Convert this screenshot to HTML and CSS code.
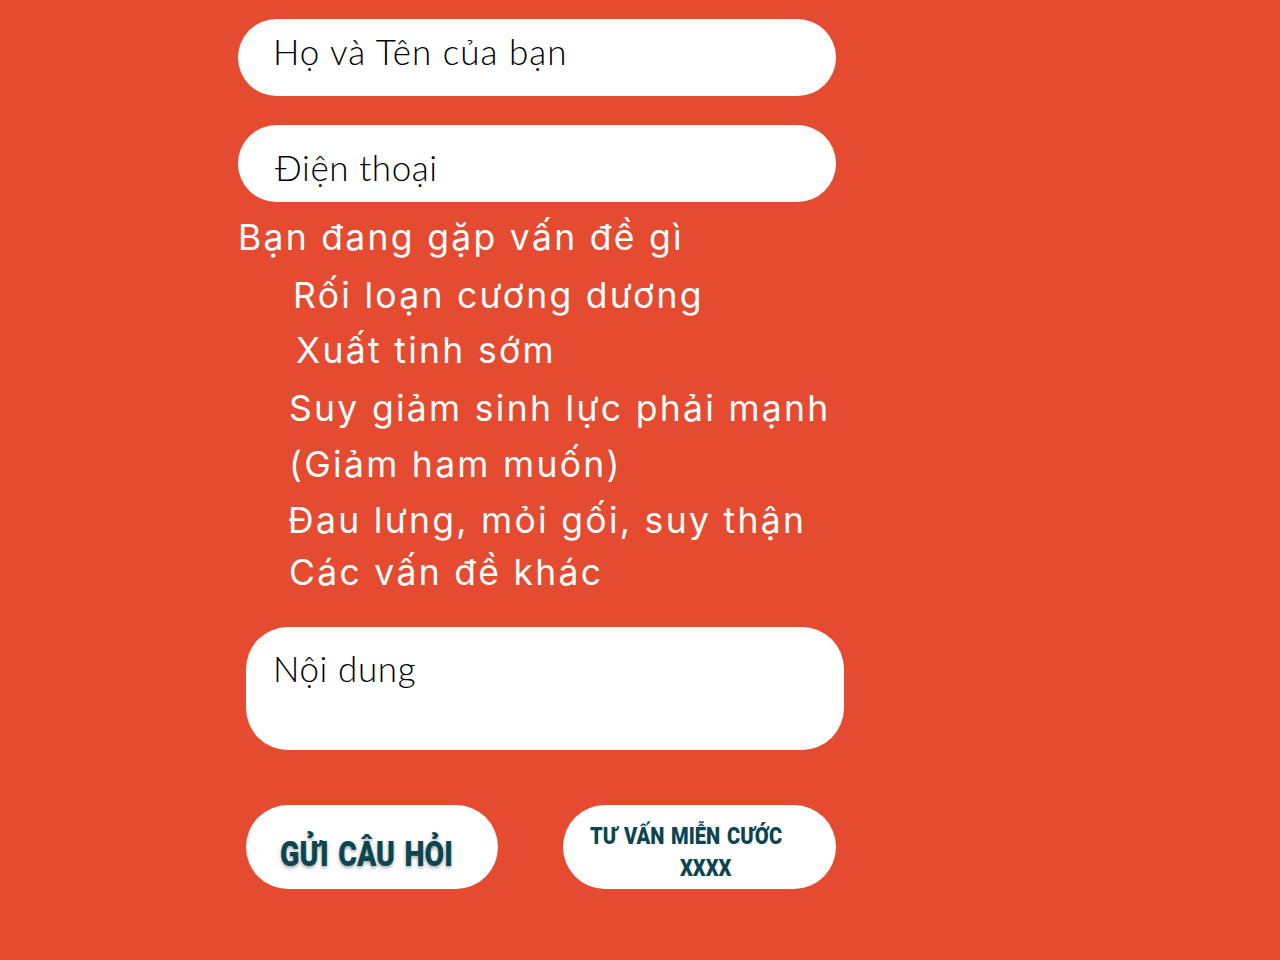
FILE: index.html
```html
<!DOCTYPE html>
<html lang="vi">
<head>
<meta charset="utf-8">
<title>Form</title>
<link rel="stylesheet" href="styles.css">
</head>
<body>
<main class="form">
  <div class="field field-name">Họ và Tên của bạn</div>
  <div class="field field-phone">Điện thoại</div>
  <div class="question">
    <div class="q-title">Bạn đang gặp vấn đề gì</div>
    <div class="opt opt-a">Rối loạn cương dương</div>
    <div class="opt opt-b">Xuất tinh sớm</div>
    <div class="opt opt-c">Suy giảm sinh lực phải mạnh</div>
    <div class="opt opt-d">(Giảm ham muốn)</div>
    <div class="opt opt-e">Đau lưng, mỏi gối, suy thận</div>
    <div class="opt opt-f">Các vấn đề khác</div>
  </div>
  <div class="content-box">Nội dung</div>
  <div class="actions">
    <button class="btn btn-send"><span class="btn-text">GỬI CÂU HỎI</span></button>
    <button class="btn btn-call"><span class="btn-text line1">TƯ VẤN MIỄN CƯỚC</span><span class="btn-text line2">XXXX</span></button>
  </div>
</main>
</body>
</html>
```
FILE: styles.css
```css
html, body {
  margin: 0;
  padding: 0;
}
body {
  background: #e54b30;
  width: 1280px;
  height: 960px;
  overflow: hidden;
}
.form {
  display: flex;
  flex-direction: column;
  margin-left: 238px;
  width: 598px;
  padding-top: 19px;
}
.field {
  box-sizing: border-box;
  height: 77px;
  background: #fff;
  border-radius: 39px;
  font-family: Lato, "Open Sans", sans-serif;
  font-weight: 300;
  font-size: 35px;
  line-height: 42px;
  letter-spacing: 0.6px;
  color: #000;
}
.field-name {
  padding: 11px 0 0 35px;
  letter-spacing: 1px;
}
.field-phone {
  margin-top: 29px;
  padding: 21px 0 0 37px;
}
.question {
  margin-top: 8px;
  font-family: Inter, "Noto Sans", sans-serif;
  font-size: 35.5px;
  line-height: 56px;
  letter-spacing: 2.3px;
  color: #fff;
}
.opt-a { padding-left: 55px; margin-top: 2px; }
.opt-b { padding-left: 58px; margin-top: -1px; }
.opt-c { padding-left: 51px; margin-top: 2px; }
.opt-d { padding-left: 51px; }
.opt-e { padding-left: 50px; }
.opt-f { padding-left: 51px; margin-top: -4px; }
.content-box {
  box-sizing: border-box;
  margin-top: 26px;
  margin-left: 8px;
  width: 598px;
  height: 123px;
  background: #fff;
  border-radius: 42px;
  padding: 20px 0 0 27px;
  font-family: Lato, "Open Sans", sans-serif;
  font-weight: 300;
  font-size: 35px;
  line-height: 42px;
  letter-spacing: 0.6px;
  color: #000;
}
.actions {
  display: flex;
  gap: 65px;
  margin-top: 55px;
  margin-left: 8px;
}
.btn {
  box-sizing: border-box;
  height: 84px;
  border: none;
  background: #fff;
  border-radius: 42px;
  padding: 0;
  display: flex;
  flex-direction: column;
  align-items: flex-start;
  font-family: Roboto, "Liberation Sans", sans-serif;
  font-weight: 900;
  color: #0b4650;
}
.btn-text {
  display: inline-block;
  white-space: nowrap;
  transform-origin: left top;
}
.btn-send {
  width: 252px;
  padding: 31px 0 0 34px;
  font-size: 35px;
  line-height: 38px;
}
.btn-send .btn-text {
  transform: scaleX(0.815);
  word-spacing: 3px;
  text-shadow: 0 2px 4px rgba(0, 0, 0, 0.35);
}
.btn-call {
  width: 273px;
  padding: 16px 0 0 27px;
  font-size: 23px;
  line-height: 32px;
}
.btn-call .btn-text {
  transform: scaleX(0.875);
  word-spacing: 2px;
}
.btn-call .line2 {
  margin-left: 90px;
}
```
